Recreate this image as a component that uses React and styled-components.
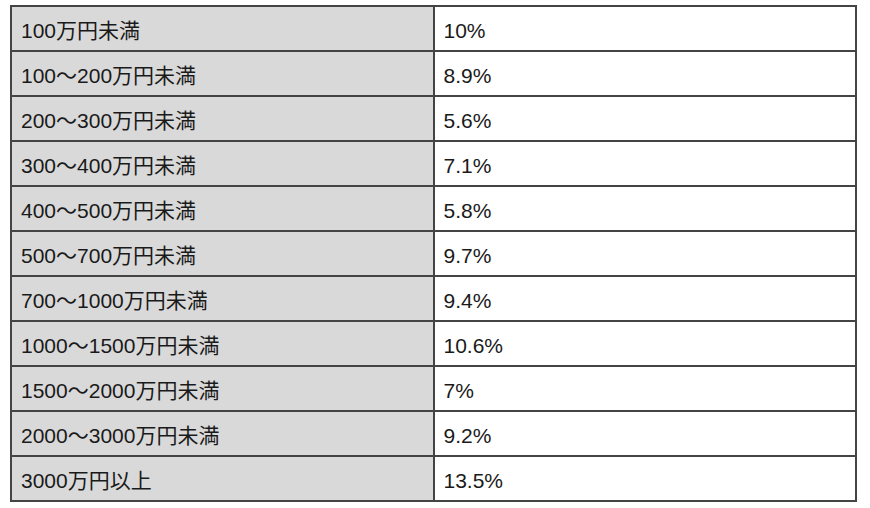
import React from "react";
import styled, { createGlobalStyle } from "styled-components";

const Global = createGlobalStyle`
  html, body { margin: 0; padding: 0; background: #ffffff; }
  body { font-family: "Liberation Sans", "Noto Sans CJK JP", sans-serif; }
`;

const Page = styled.div`
  padding: 5px 0 0 10px;
`;

const Table = styled.table`
  width: 847px;
  border-collapse: collapse;
  table-layout: fixed;
  border: 2px solid #444;
`;

const Row = styled.tr`
  height: 45px;
`;

const Cell = styled.td`
  border: 2px solid #444;
  padding: 4px 0 0 9px;
  font-size: 21px;
  line-height: 1;
  color: #1a1a1a;
  background: ${(p) => (p.$head ? "#d9d9d9" : "#ffffff")};
  vertical-align: middle;
  white-space: nowrap;
`;

const rows = [
  ["100万円未満", "10%"],
  ["100〜200万円未満", "8.9%"],
  ["200〜300万円未満", "5.6%"],
  ["300〜400万円未満", "7.1%"],
  ["400〜500万円未満", "5.8%"],
  ["500〜700万円未満", "9.7%"],
  ["700〜1000万円未満", "9.4%"],
  ["1000〜1500万円未満", "10.6%"],
  ["1500〜2000万円未満", "7%"],
  ["2000〜3000万円未満", "9.2%"],
  ["3000万円以上", "13.5%"],
];

export default function App() {
  return (
    <Page>
      <Global />
      <Table>
        <tbody>
          {rows.map(([a, b]) => (
            <Row key={a}>
              <Cell $head>{a}</Cell>
              <Cell>{b}</Cell>
            </Row>
          ))}
        </tbody>
      </Table>
    </Page>
  );
}
